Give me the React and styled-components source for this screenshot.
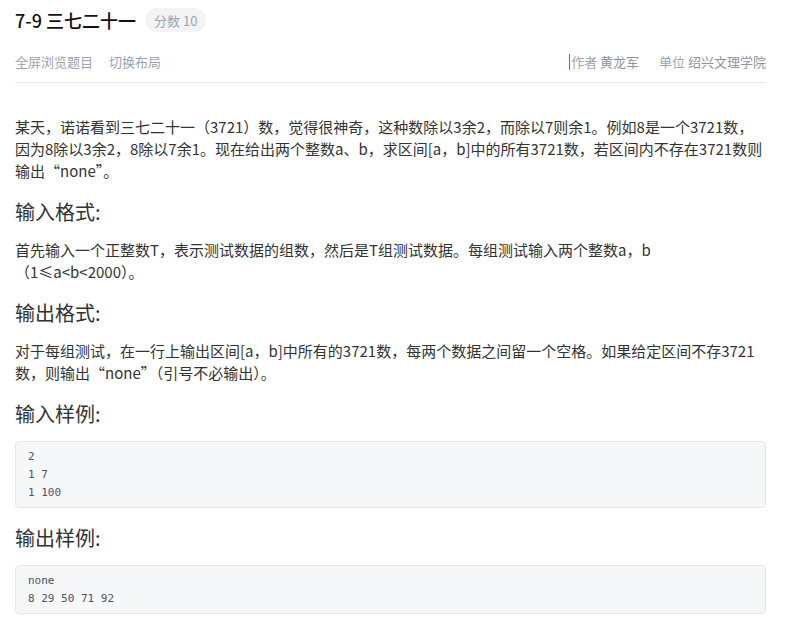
import React from "react";
import styled, { createGlobalStyle } from "styled-components";

const Global = createGlobalStyle`
  html, body { margin: 0; padding: 0; background: #fff; }
  body {
    font-family: "Noto Sans CJK SC", "Noto Sans", sans-serif;
    color: #333;
  }
`;

const Page = styled.div`
  width: 751px;
  padding: 0 24px 0 15px;
`;

const TitleRow = styled.div`
  display: flex;
  align-items: center;
  gap: 9px;
  height: 40px;
`;

const Title = styled.h1`
  margin: 0;
  font-size: 18px;
  font-weight: 500;
  color: #111;
`;

const Tag = styled.span`
  display: inline-flex;
  align-items: center;
  height: 24px;
  padding: 0 9px;
  border-radius: 12px;
  background: #f3f4f6;
  color: #9ca3af;
  font-size: 13px;
`;

const Toolbar = styled.div`
  display: flex;
  align-items: center;
  justify-content: space-between;
  height: 42px;
  border-bottom: 1px solid #e5e7eb;
  font-size: 13px;
  color: #9ca3af;
`;

const Group = styled.div`
  display: flex;
  gap: ${(p) => p.$gap || 16}px;
  align-items: center;
`;

const Meta = styled.span`
  color: #9ca3af;
  b { font-weight: 400; color: #8e949d; }
`;

const Caret = styled.span`
  display: inline-block;
  width: 1px;
  height: 16px;
  margin-right: 1px;
  background: #6b7280;
  vertical-align: -3px;
`;

const Content = styled.div`
  padding-top: 33px;
`;

const Para = styled.p`
  margin: 0;
  font-size: 15px;
  line-height: 22px;
  color: #333;
`;

const Heading = styled.h3`
  margin: 16px 0 13px;
  font-size: 20px;
  font-weight: 400;
  line-height: 28px;
  color: #333;
`;

const Code = styled.pre`
  margin: 14px 0 0;
  padding: 6px 12px 5px;
  background: #f6f7f9;
  border: 1px solid #e5e7eb;
  border-radius: 4px;
  font-family: "DejaVu Sans Mono", "Liberation Mono", monospace;
  font-size: 11px;
  line-height: 18px;
  color: #4b5563;
  h3 + & { margin-top: 1px; }
`;

export default function App() {
  return (
    <>
      <Global />
      <Page>
        <TitleRow>
          <Title>7-9 三七二十一</Title>
          <Tag>分数 10</Tag>
        </TitleRow>
        <Toolbar>
          <Group $gap={16}>
            <span>全屏浏览题目</span>
            <span>切换布局</span>
          </Group>
          <Group $gap={20}>
            <Meta>
              <Caret />作者 <b>黄龙军</b>
            </Meta>
            <Meta>
              单位 <b>绍兴文理学院</b>
            </Meta>
          </Group>
        </Toolbar>
        <Content>
          <Para>
            某天，诺诺看到三七二十一（3721）数，觉得很神奇，这种数除以3余2，而除以7则余1。例如8是一个3721数，因为8除以3余2，8除以7余1。现在给出两个整数a、b，求区间[a，b]中的所有3721数，若区间内不存在3721数则输出“none”。
          </Para>
          <Heading>输入格式:</Heading>
          <Para>
            首先输入一个正整数T，表示测试数据的组数，然后是T组测试数据。每组测试输入两个整数a，b
            <br />
            （1≤a&lt;b&lt;2000）。
          </Para>
          <Heading>输出格式:</Heading>
          <Para>
            对于每组测试，在一行上输出区间[a，b]中所有的3721数，每两个数据之间留一个空格。如果给定区间不存3721数，则输出“none”（引号不必输出）。
          </Para>
          <Heading>输入样例:</Heading>
          <Code>{"2\n1 7\n1 100"}</Code>
          <Heading>输出样例:</Heading>
          <Code>{"none\n8 29 50 71 92"}</Code>
        </Content>
      </Page>
    </>
  );
}
